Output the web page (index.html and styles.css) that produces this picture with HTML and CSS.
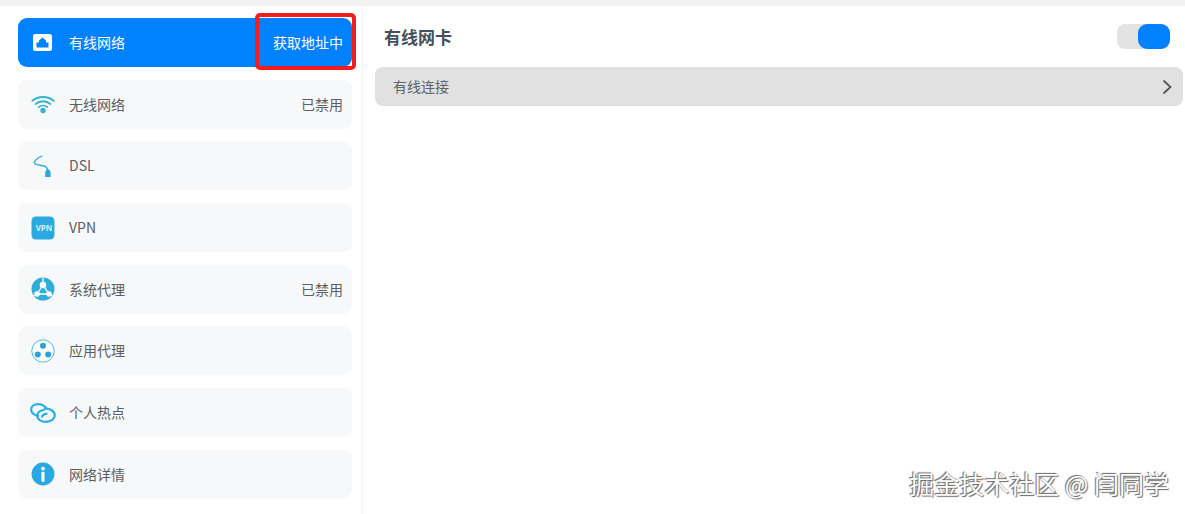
FILE: index.html
```html
<!DOCTYPE html>
<html lang="zh-CN">
<head>
  <meta charset="UTF-8" />
  <title>网络设置</title>
  <link rel="stylesheet" href="styles.css">
</head>
<body>
  <div class="top-strip"></div>
  <div class="app">
    <aside class="sidebar">
      <div class="nav-item active">
        <svg class="nav-icon" viewBox="0 0 19 17"><rect width="19" height="17" rx="2.500" fill="#fff"/><path d="M3.500 13.500V8.500h2.500V6.500L9.500 3.500l3.500 3v2h2.500v5z" fill="#0081ff"/></svg>
        <span class="nav-label">有线网络</span>
        <span class="nav-status">获取地址中</span>
        <div class="highlight"></div>
      </div>
      <div class="nav-item">
        <svg class="nav-icon" viewBox="0 0 26 20"><g fill="none" stroke="#36b3d1" stroke-width="2" stroke-linecap="round"><path d="M1.500 6.500C7.500 1 18.500 1 24.500 6.500"/><path d="M5 10C9.500 6 16.500 6 21 10"/><path d="M8.500 13.200C11 11.200 15 11.200 17.500 13.200"/></g><circle cx="13" cy="17" r="2.900" fill="#36b3d1"/></svg>
        <span class="nav-label">无线网络</span>
        <span class="nav-status">已禁用</span>
      </div>
      <div class="nav-item">
        <svg class="nav-icon" viewBox="0 0 22 22"><path d="M10 2C7 3 3 6 3 8c0 2 5 2 9 3 2 .5 3 2 3.500 4" fill="none" stroke="#36b0dc" stroke-width="1.300" stroke-linecap="round"/><path d="M13 17l1-2.500h3l1 2.500v4h-5z" fill="#29a8dc"/></svg>
        <span class="nav-label">DSL</span>
      </div>
      <div class="nav-item">
        <svg class="nav-icon" viewBox="0 0 22 22"><rect width="21" height="21" x=".5" y=".5" rx="4" fill="#29a9df"/></svg>
        <span class="vpn-mark">VPN</span>
        <span class="nav-label">VPN</span>
      </div>
      <div class="nav-item">
        <svg class="nav-icon" viewBox="0 0 24 24"><circle cx="12" cy="12" r="11.500" fill="#30aedb"/><path d="M12 8l-6 9h12zM12 8V1M6 17L1.500 19.500M18 17l4.500 2.500" stroke="#fff" stroke-width="1.300" fill="none"/><circle cx="12" cy="8" r="3.300" fill="#fff"/><circle cx="6" cy="17" r="2.800" fill="#fff"/><circle cx="18" cy="17" r="2.800" fill="#fff"/></svg>
        <span class="nav-label">系统代理</span>
        <span class="nav-status">已禁用</span>
      </div>
      <div class="nav-item">
        <svg class="nav-icon" viewBox="0 0 24 24"><circle cx="12" cy="12" r="11.200" fill="#fff" stroke="#4db8dc" stroke-width="1"/><circle cx="12" cy="6.800" r="3" fill="#29a2d8"/><circle cx="6.800" cy="15.500" r="3" fill="#29a2d8"/><circle cx="17.200" cy="15.500" r="3" fill="#29a2d8"/></svg>
        <span class="nav-label">应用代理</span>
      </div>
      <div class="nav-item">
        <svg class="nav-icon nav-icon-wide" viewBox="0 0 26 20"><g fill="none" stroke="#2eaee0" stroke-width="2.200" stroke-linecap="round"><path d="M8 12.800C4 12 1.200 9.500 1.200 6.500 1.200 3.500 4 1.200 8 1.200c3.500 0 6.500 1.500 8.500 4.300"/><path d="M15 5.500c5.500 0 9.800 3 9.800 6.800 0 3.700-3.800 6.500-8.800 6.500-5 0-8.800-2.500-8.800-6 0-3 3-5.800 6.800-5.800"/><path d="M12 13.500c.8-1.600 2.400-2.700 4.500-2.700"/></g></svg>
        <span class="nav-label">个人热点</span>
      </div>
      <div class="nav-item">
        <svg class="nav-icon" viewBox="0 0 22 22"><circle cx="11" cy="11" r="10.500" fill="#29a9df"/><circle cx="11" cy="6" r="1.700" fill="#fff"/><rect x="9.600" y="9" width="2.800" height="9" rx=".6" fill="#fff"/></svg>
        <span class="nav-label">网络详情</span>
      </div>
    </aside>

    <main class="content">
      <div class="content-head">
        <h2>有线网卡</h2>
        <div class="switch"><div class="switch-knob"></div></div>
      </div>
      <div class="conn-row">
        <span class="conn-label">有线连接</span>
        <svg class="chevron" viewBox="0 0 10 16"><path d="M1.500 1.500L8.500 8l-7 6.500" fill="none" stroke="#555" stroke-width="1.800"/></svg>
      </div>
    </main>
  </div>
  <div class="watermark">掘金技术社区 @ 闫同学</div>
</body>
</html>
```

FILE: styles.css
```css
html, body {
  margin: 0; padding: 0;
  font-family: "Noto Sans CJK SC", "Noto Sans", sans-serif;
  background: #fff;
  color: #5a5e63;
  height: 514px;
  overflow: hidden;
}
.top-strip {
  height: 6px;
  background: #f2f2f2;
}
.app {
  display: flex;
  height: 508px;
}
.sidebar {
  width: 334px;
  padding: 12px 10px 0 18px;
  border-right: 1px solid #f3f3f3;
  display: flex;
  flex-direction: column;
  gap: 12.700px;
  flex-shrink: 0;
}
.nav-item {
  position: relative;
  height: 49px;
  display: flex;
  align-items: center;
  background: #f7f8f9;
  border-radius: 9px;
  padding: 0 9px 0 0;
  font-size: 14px;
  flex-shrink: 0;
}
.nav-item.active {
  background: #0081ff;
  color: #fff;
}
.nav-icon {
  width: 24px;
  height: 24px;
  margin-left: 13px;
  margin-right: 14px;
  flex-shrink: 0;
}
.nav-icon-wide {
  width: 26px;
  margin-left: 12px;
  margin-right: 13px;
}
.active .nav-icon {
  width: 19px;
  height: 17px;
  margin-left: 15px;
  margin-right: 17px;
}
.vpn-mark {
  position: absolute;
  left: 14px;
  width: 24px;
  text-align: center;
  color: #d8f1fb;
  font-size: 8px;
  font-weight: 700;
  font-family: "Noto Sans", sans-serif;
}
.nav-label {
  flex: 1;
  margin-bottom: 1px;
}
.nav-status {
  font-size: 14px;
  margin-bottom: 1px;
}
.highlight {
  position: absolute;
  top: -5px;
  right: -4px;
  width: 93px;
  height: 49px;
  border: 4px solid #f41c1c;
  border-radius: 5px;
}
.content {
  flex: 1;
  padding: 0 2px 0 12px;
}
.content-head {
  height: 61px;
  display: flex;
  align-items: center;
  justify-content: space-between;
  padding: 0 13px 0 9px;
}
.content-head h2 {
  margin: 0;
  font-size: 17px;
  font-weight: 700;
  color: #44505c;
}
.switch {
  width: 53px;
  height: 25px;
  margin-top: -1px;
  background: #e3e3e3;
  border-radius: 8px;
  display: flex;
  justify-content: flex-end;
}
.switch-knob {
  width: 32px;
  height: 25px;
  background: #0081ff;
  border-radius: 9px;
}
.conn-row {
  height: 39px;
  background: #e1e1e1;
  border-radius: 8px;
  display: flex;
  align-items: center;
  justify-content: space-between;
  padding: 0 11px 0 18px;
  font-size: 14px;
  color: #5f6468;
}
.conn-label {
  margin-bottom: 2px;
}
.chevron {
  width: 10px;
  height: 16px;
}
.watermark {
  position: absolute;
  right: 16px;
  top: 466px;
  font-size: 25px;
  line-height: 34px;
  color: #fff;
  white-space: nowrap;
  text-shadow: -1px -1px 1px #666, 1px 1px 1px #666;
}
```
